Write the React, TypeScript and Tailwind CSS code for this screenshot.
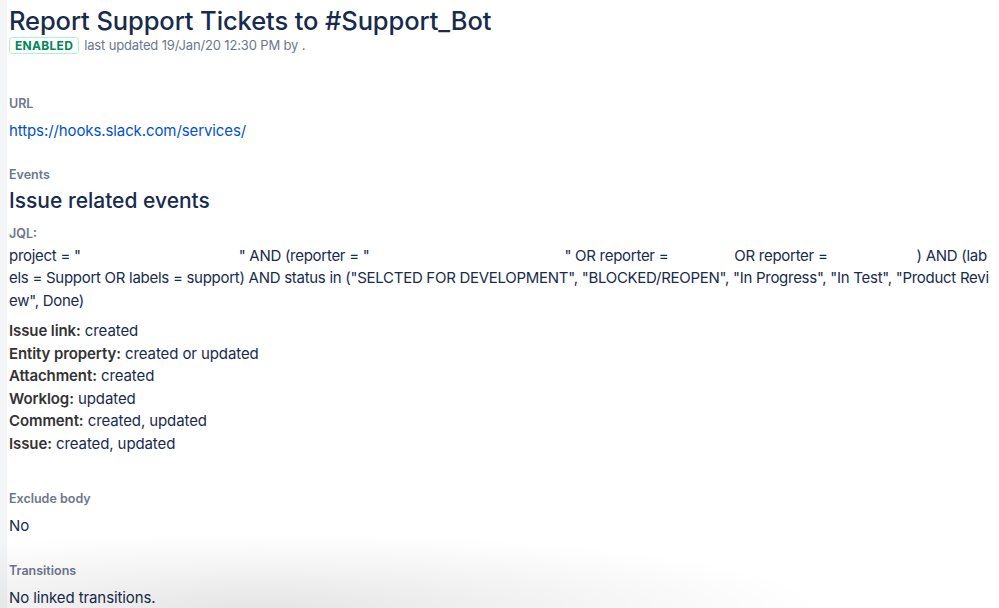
import React from 'react'

const font = { fontFamily: 'Inter, "Noto Sans", "Liberation Sans", sans-serif' }

function Blank({ w }: { w: number }) {
  return <span className="inline-block" style={{ width: w }} />
}

function Label({ children, className = '' }: { children: React.ReactNode; className?: string }) {
  return <div className={`text-[12.5px] font-semibold text-[#6b778c] leading-4 ${className}`}>{children}</div>
}

const events = [
  ['Issue link:', 'created'],
  ['Entity property:', 'created or updated'],
  ['Attachment:', 'created'],
  ['Worklog:', 'updated'],
  ['Comment:', 'created, updated'],
  ['Issue:', 'created, updated'],
]

export default function App() {
  return (
    <div className="relative flex h-[608px] w-[999px] overflow-hidden bg-white text-[#172b4d]" style={font}>
      <div className="w-[7px] shrink-0 bg-[#f4f5f7]" />
      <div className="flex-1 pl-[2px] pt-[6px]">
        <h1 className="text-[25.5px] font-medium leading-[29px] tracking-[-0.1px] text-[#172b4d]">
          Report Support Tickets to #Support_Bot
        </h1>
        <div className="mt-[1px] flex items-center gap-[5px]">
          <span className="rounded-[3px] border border-[#abf5d1] px-[5px] text-[12px] font-bold leading-[15px] tracking-[0.3px] text-[#00875a]">
            ENABLED
          </span>
          <span className="text-[13px] tracking-[-0.15px] text-[#6b778c]">last updated 19/Jan/20 12:30 PM by .</span>
        </div>

        <Label className="mt-[40px]">URL</Label>
        <div className="mt-[9px] text-[15px] leading-5 tracking-[-0.1px] text-[#0052cc]">https://hooks.slack.com/services/</div>

        <Label className="mt-[26px]">Events</Label>
        <div className="mt-[4px] text-[21px] font-medium leading-7">Issue related events</div>
        <Label className="mt-[11px]">JQL:</Label>
        <div className="mt-[3px] text-[15px] leading-[22.5px] tracking-[-0.28px] whitespace-nowrap">
          <div>
            project = "<Blank w={158} />" AND (reporter = "<Blank w={195} />" OR reporter =<Blank w={66} />OR reporter =<Blank w={89} />) AND (lab
          </div>
          <div>
            els = Support OR labels = support) AND status in ("SELCTED FOR DEVELOPMENT", "BLOCKED/REOPEN", "In Progress", "In Test", "Product Revi
          </div>
          <div>ew", Done)</div>
        </div>

        <div className="mt-[8px] text-[15px] leading-[22.5px] tracking-[-0.1px]">
          {events.map(([k, v]) => (
            <div key={k}>
              <span className="font-semibold text-[#333333]">{k}</span> {v}
            </div>
          ))}
        </div>

        <Label className="mt-[36px]">Exclude body</Label>
        <div className="mt-[9px] text-[15px] leading-5">No</div>

        <Label className="mt-[27px]">Transitions</Label>
        <div className="mt-[9px] text-[15px] leading-5 tracking-[-0.1px]">No linked transitions.</div>
      </div>
      <div
        className="pointer-events-none absolute bottom-0 left-0 h-[75px] w-[820px]"
        style={{ background: 'radial-gradient(ellipse 68% 100% at 32% 100%, rgba(0,0,0,0.1), rgba(0,0,0,0.04) 60%, rgba(0,0,0,0) 100%)' }}
      />
    </div>
  )
}
